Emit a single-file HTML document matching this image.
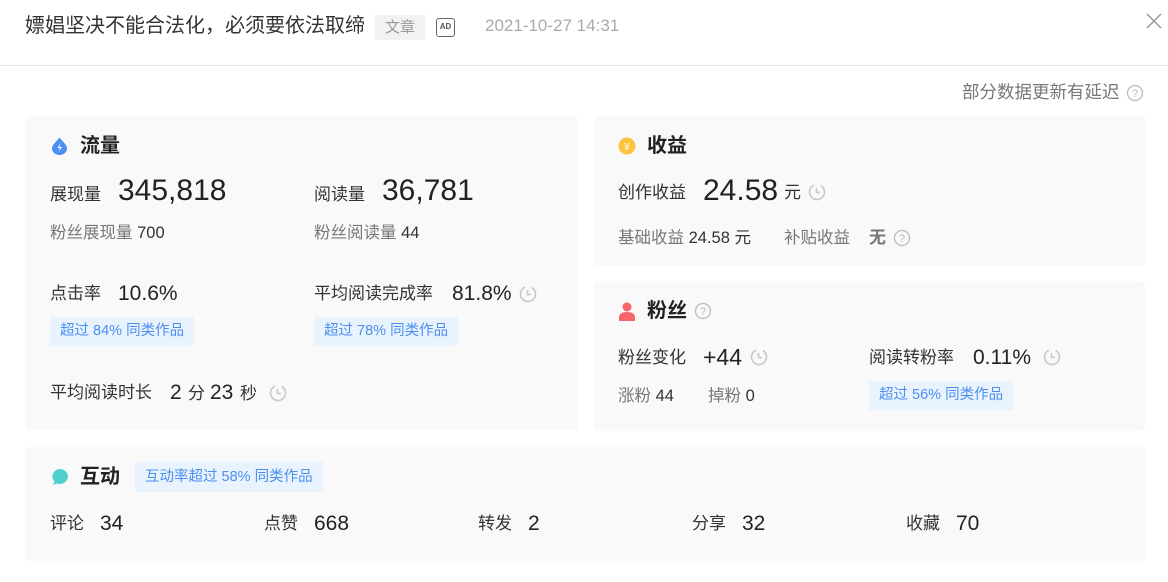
<!DOCTYPE html>
<html><head><meta charset="utf-8">
<style>
*{margin:0;padding:0;box-sizing:border-box}
body{width:1168px;height:582px;background:#fff;position:relative;overflow:hidden;font-family:"Liberation Sans","Noto Sans CJK SC",sans-serif;color:#222}
.a{position:absolute;white-space:nowrap;line-height:1}
.card{position:absolute;background:#f9f9f9;border-radius:4px}
.l{font-size:17px;color:#333}
.s{font-size:16.5px;color:#777}
.s b{font-weight:normal;color:#333}
.big{font-size:30px;color:#222}
.mid{font-size:21px;color:#222}
.h{font-size:20px;font-weight:bold;color:#222}
.tag{position:absolute;background:#e9f3fd;color:#4b8ef0;font-size:14.5px;line-height:29px;padding:0 10px;white-space:nowrap}
.clk{position:absolute;width:18px;height:18px}
</style></head><body>
<svg width="0" height="0" style="position:absolute"><defs>
<g id="clock"><circle cx="9" cy="9" r="7.5" fill="none" stroke="#c8c8c8" stroke-width="1.6" stroke-dasharray="40 8" transform="rotate(-60 9 9)"/><path d="M8.5 5v4.5h3.5" fill="none" stroke="#c8c8c8" stroke-width="1.6"/></g>
<g id="q"><circle cx="9" cy="9" r="7.5" fill="none" stroke="#bbb" stroke-width="1.3"/><text x="9" y="13" font-size="11" text-anchor="middle" fill="#bbb" font-family="Liberation Sans">?</text></g>
</defs></svg>

<div class="a" style="left:25px;top:16px;font-size:20px;color:#333">嫖娼坚决不能合法化，必须要依法取缔</div>
<div class="a" style="left:375px;top:15px;width:50px;text-align:center;background:#f2f2f2;color:#999;font-size:15px;line-height:25px">文章</div>
<div class="a" style="left:436px;top:18px;width:19px;height:19px;border:1.5px solid #666;border-radius:3px;font-size:8px;font-weight:bold;color:#555;line-height:16px;text-align:center">AD</div>
<div class="a" style="left:485px;top:17px;font-size:17px;color:#aaa">2021-10-27 14:31</div>
<svg class="a" style="left:1145px;top:12px" width="18" height="18"><path d="M2 2L16 16M16 2L2 16" stroke="#999" stroke-width="1.5"/></svg>
<div class="a" style="left:0;top:65px;width:1168px;height:1px;background:#e8e8e8"></div>
<div class="a" style="left:962px;top:84px;font-size:17.5px;color:#777">部分数据更新有延迟</div>
<svg class="clk" style="left:1126px;top:84px"><use href="#q"/></svg>

<!-- 流量 -->
<div class="card" style="left:25px;top:116px;width:553px;height:314px"></div>
<svg class="a" style="left:51px;top:137px" width="17" height="18"><path d="M8.5 0.5C5 5 1 8 1 11.5a7.5 6.5 0 0 0 15 0C16 8 12 5 8.5 0.5z" fill="#4c8ff5"/><path d="M9.5 6L6.5 11h2.5l-1 4 3-5H8.5z" fill="#fff"/></svg>
<div class="a h" style="left:80px;top:136px">流量</div>
<div class="a l" style="left:50px;top:186px">展现量</div>
<div class="a big" style="left:118px;top:176px">345,818</div>
<div class="a l" style="left:314px;top:186px">阅读量</div>
<div class="a big" style="left:382px;top:176px">36,781</div>
<div class="a s" style="left:50px;top:225px">粉丝展现量 <b>700</b></div>
<div class="a s" style="left:314px;top:225px">粉丝阅读量 <b>44</b></div>
<div class="a l" style="left:50px;top:285px">点击率</div>
<div class="a mid" style="left:118px;top:283px">10.6%</div>
<div class="a l" style="left:314px;top:285px">平均阅读完成率</div>
<div class="a mid" style="left:452px;top:283px">81.8%</div>
<svg class="clk" style="left:519px;top:285px"><use href="#clock"/></svg>
<div class="tag" style="left:50px;top:317px">超过 84% 同类作品</div>
<div class="tag" style="left:314px;top:317px">超过 78% 同类作品</div>
<div class="a l" style="left:50px;top:384px">平均阅读时长</div>
<div class="a mid" style="left:170px;top:382px">2</div>
<div class="a l" style="left:188px;top:385px">分</div>
<div class="a mid" style="left:210px;top:382px">23</div>
<div class="a l" style="left:240px;top:385px">秒</div>
<svg class="clk" style="left:269px;top:384px"><use href="#clock"/></svg>

<!-- 收益 -->
<div class="card" style="left:594px;top:116px;width:551px;height:150px"></div>
<svg class="a" style="left:618px;top:137px" width="18" height="18"><circle cx="9" cy="9" r="8.5" fill="#fcc43d"/><text x="9" y="13" font-size="10" text-anchor="middle" fill="#fff" font-family="Liberation Sans">¥</text></svg>
<div class="a h" style="left:647px;top:136px">收益</div>
<div class="a l" style="left:618px;top:184px">创作收益</div>
<div class="a big" style="left:703px;top:176px">24.58</div>
<div class="a l" style="left:784px;top:184px">元</div>
<svg class="clk" style="left:808px;top:183px"><use href="#clock"/></svg>
<div class="a s" style="left:618px;top:230px">基础收益 <b>24.58 元</b></div>
<div class="a s" style="left:784px;top:230px">补贴收益</div>
<div class="a" style="left:869px;top:229px;font-size:17px;font-weight:bold;color:#777">无</div>
<svg class="clk" style="left:893px;top:229px"><use href="#q"/></svg>

<!-- 粉丝 -->
<div class="card" style="left:594px;top:281px;width:551px;height:150px"></div>
<svg class="a" style="left:618px;top:301px" width="18" height="20"><circle cx="9" cy="6" r="4.5" fill="#f5656a"/><path d="M1 20v-4c0-3 3-5 8-5s8 2 8 5v4z" fill="#f5656a"/></svg>
<div class="a h" style="left:647px;top:301px">粉丝</div>
<svg class="clk" style="left:694px;top:302px"><use href="#q"/></svg>
<div class="a l" style="left:618px;top:349px">粉丝变化</div>
<div class="a" style="left:703px;top:346px;font-size:23px">+44</div>
<svg class="clk" style="left:750px;top:348px"><use href="#clock"/></svg>
<div class="a l" style="left:869px;top:349px">阅读转粉率</div>
<div class="a mid" style="left:973px;top:347px">0.11%</div>
<svg class="clk" style="left:1043px;top:348px"><use href="#clock"/></svg>
<div class="a s" style="left:618px;top:388px">涨粉 <b>44</b></div>
<div class="a s" style="left:708px;top:388px">掉粉 <b>0</b></div>
<div class="tag" style="left:869px;top:381px">超过 56% 同类作品</div>

<!-- 互动 -->
<div class="card" style="left:25px;top:447px;width:1120px;height:114px"></div>
<svg class="a" style="left:51px;top:468px" width="18" height="18"><path d="M9 1a8 7.5 0 1 1-3 14.5L2 17l1.5-3.5A8 7.5 0 0 1 9 1z" fill="#4dcfcf"/></svg>
<div class="a h" style="left:80px;top:467px">互动</div>
<div class="tag" style="left:135px;top:462px;line-height:30px">互动率超过 58% 同类作品</div>
<div class="a l" style="left:50px;top:515px">评论</div><div class="a mid" style="left:100px;top:513px">34</div>
<div class="a l" style="left:264px;top:515px">点赞</div><div class="a mid" style="left:314px;top:513px">668</div>
<div class="a l" style="left:478px;top:515px">转发</div><div class="a mid" style="left:528px;top:513px">2</div>
<div class="a l" style="left:692px;top:515px">分享</div><div class="a mid" style="left:742px;top:513px">32</div>
<div class="a l" style="left:906px;top:515px">收藏</div><div class="a mid" style="left:956px;top:513px">70</div>
</body></html>
